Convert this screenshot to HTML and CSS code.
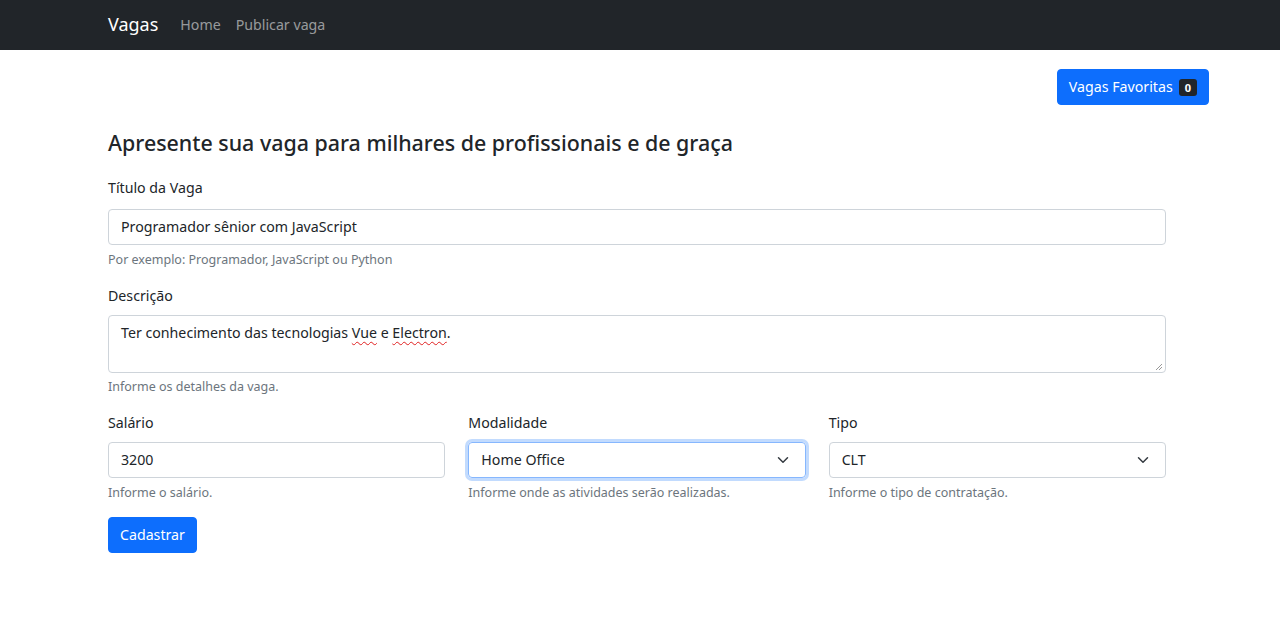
FILE: index.html
```html
<!DOCTYPE html>
<html lang="pt-BR">
<head>
<meta charset="utf-8">
<title>Vagas</title>
<link rel="stylesheet" href="styles.css">
</head>
<body>
<nav class="navbar">
  <div class="nav-inner">
    <span class="brand">Vagas</span>
    <a class="nav-link">Home</a>
    <a class="nav-link">Publicar vaga</a>
  </div>
</nav>
<main class="container">
  <div class="fav-row">
    <button class="btn btn-primary fav-btn">Vagas Favoritas <span class="badge">0</span></button>
  </div>
  <h1 class="title">Apresente sua vaga para milhares de profissionais e de graça</h1>
  <div class="field first">
    <label class="label">Título da Vaga</label>
    <div class="control">Programador sênior com JavaScript</div>
    <div class="help">Por exemplo: Programador, JavaScript ou Python</div>
  </div>
  <div class="field">
    <label class="label">Descrição</label>
    <div class="control textarea"><span>Ter conhecimento das tecnologias <span class="spell">Vue</span> e <span class="spell">Electron</span>.</span><span class="grip"><svg width="8" height="8" viewBox="0 0 8 8"><path d="M7 1L1 7M7 4L4 7" stroke="#999" stroke-width="1" fill="none"/></svg></span></div>
    <div class="help">Informe os detalhes da vaga.</div>
  </div>
  <div class="grid3">
    <div class="field">
      <label class="label">Salário</label>
      <div class="control">3200</div>
      <div class="help">Informe o salário.</div>
    </div>
    <div class="field">
      <label class="label">Modalidade</label>
      <div class="control select focus">Home Office<svg class="chev" width="12" height="12" viewBox="0 0 16 16"><path d="M2 5l6 6 6-6" stroke="#343a40" stroke-width="2" fill="none" stroke-linecap="round" stroke-linejoin="round"/></svg></div>
      <div class="help">Informe onde as atividades serão realizadas.</div>
    </div>
    <div class="field">
      <label class="label">Tipo</label>
      <div class="control select">CLT<svg class="chev" width="12" height="12" viewBox="0 0 16 16"><path d="M2 5l6 6 6-6" stroke="#343a40" stroke-width="2" fill="none" stroke-linecap="round" stroke-linejoin="round"/></svg></div>
      <div class="help">Informe o tipo de contratação.</div>
    </div>
  </div>
  <div class="submit-row">
    <button class="btn btn-primary">Cadastrar</button>
  </div>
</main>
</body>
</html>
```
FILE: styles.css
```css
* { box-sizing: border-box; }
body {
  margin: 0;
  font-family: "Noto Sans", "Open Sans", sans-serif;
  font-size: 14.2px;
  color: #212529;
  background: #fff;
}
.navbar {
  background: #212529;
  height: 50px;
  display: flex;
  align-items: center;
  padding-bottom: 2px;
}
.nav-inner {
  padding-left: 108px;
  display: flex;
  align-items: center;
}
.brand {
  color: #fff;
  font-size: 18px;
  margin-right: 22px;
}
.nav-link {
  color: rgba(255,255,255,0.55);
  font-size: 14.2px;
  margin-right: 15px;
}
.container {
  width: 1058px;
  margin-left: 108px;
}
.fav-row {
  display: flex;
  justify-content: flex-end;
  margin-top: 19px;
  margin-right: -43px;
}
.btn {
  font-family: inherit;
  font-size: 14.2px;
  border: 1px solid transparent;
  border-radius: 4px;
  height: 36px;
  padding: 0 11px;
  display: inline-flex;
  align-items: center;
  line-height: 1;
}
.btn-primary {
  background: #0d6efd;
  color: #fff;
  border-color: #0d6efd;
}
.badge {
  background: #212529;
  color: #fff;
  font-size: 11px;
  font-weight: 700;
  border-radius: 3px;
  padding: 3px 6px;
  margin-left: 6px;
}
.title {
  font-size: 21.4px;
  font-weight: 500;
  margin: 25px 0 0;
  line-height: 1.2;
}
.field {
  display: flex;
  flex-direction: column;
}
.label {
  margin-top: 16px;
  line-height: 22px;
}
.field.first .label { margin-top: 21px; }
.grid3 .label { margin-top: 16px; }
.control {
  margin-top: 10px;
  height: 36px;
  border: 1px solid #ced4da;
  border-radius: 4px;
  padding: 0 12px;
  display: flex;
  align-items: center;
  position: relative;
}
.grid3 .control { margin-top: 8px; }
.textarea {
  margin-top: 8px;
  height: 58px;
  align-items: flex-start;
  padding-top: 7px;
}
.spell {
  text-decoration: underline wavy #e02020;
  text-decoration-thickness: 1px;
  text-underline-offset: 3px;
}
.grip {
  position: absolute;
  right: 2px;
  bottom: 1px;
  line-height: 0;
}
.select { justify-content: space-between; }
.chev { margin-right: 4px; }
.focus {
  border-color: #86b7fe;
  box-shadow: 0 0 0 3px rgba(13,110,253,0.25);
}
.help {
  margin-top: 6px;
  font-size: 12.5px;
  color: #6c757d;
  line-height: 18px;
}
.textarea + .help { margin-top: 5px; }
.grid3 {
  display: grid;
  grid-template-columns: repeat(3, 1fr);
  column-gap: 23px;
}
.submit-row {
  margin-top: 15px;
}
```
